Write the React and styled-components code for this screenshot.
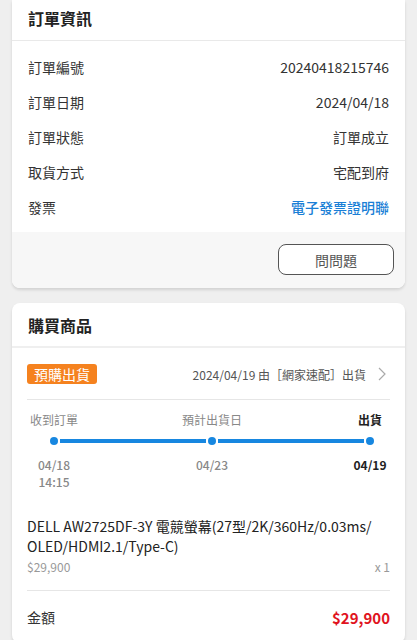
import React from 'react';
import styled, { createGlobalStyle, css } from 'styled-components';

const GlobalStyle = createGlobalStyle`
    html, body {
        margin: 0;
        padding: 0;
        background: #efefef;
        font-family: "Noto Sans CJK TC", "Noto Sans", sans-serif;
        color: #333;
    }
    * { box-sizing: border-box; }
`;

const Page = styled.div`
    width: 417px;
    height: 640px;
    overflow: hidden;
    padding: 0 12px;
    display: flex;
    flex-direction: column;
    gap: 15px;
`;

const Card = styled.div`
    background: #fff;
    border-radius: 8px;
    box-shadow: 0 2px 3px rgba(0, 0, 0, 0.12);
    overflow: hidden;
    flex-shrink: 0;
    ${props => props.flatTop && css`
        border-top-left-radius: 0;
        border-top-right-radius: 0;
    `}
`;

const CardHeader = styled.div`
    height: ${props => props.tall ? 45 : 41}px;
    padding: ${props => props.tall ? '10px' : '6px'} 16px 0;
    font-size: 16px;
    font-weight: 700;
    line-height: 24px;
    color: #222;
    border-bottom: ${props => props.tall ? '2px solid #efefef' : '1px solid #e9e9e9'};
`;

const InfoList = styled.div`
    padding: 8px 16px 8px;
`;

const InfoRow = styled.div`
    height: 35px;
    display: flex;
    align-items: center;
    justify-content: space-between;
    font-size: 14px;
    color: #333;
`;

const InfoValue = styled.span`
    ${props => props.link && css`
        color: #1a7fd6;
        font-weight: 500;
    `}
`;

const CardFooter = styled.div`
    background: #f7f7f7;
    padding: 12px 11px 13px;
    display: flex;
    justify-content: flex-end;
`;

const AskButton = styled.button`
    width: 116px;
    height: 31px;
    border: 1px solid #555;
    border-radius: 8px;
    background: #fff;
    font-family: inherit;
    font-size: 14px;
    color: #555;
`;

const Section = styled.div`
    padding: 0 15px;
`;

const ShipRow = styled.div`
    display: flex;
    align-items: center;
    justify-content: space-between;
    padding: 16px 0 15px;
    border-bottom: 1px solid #e6e6e6;
`;

const Badge = styled.span`
    background: #f5821f;
    color: #fff;
    font-size: 14px;
    line-height: 20px;
    padding: 0 7px;
    border-radius: 3px;
`;

const ShipInfo = styled.span`
    display: flex;
    align-items: center;
    gap: 12px;
    padding-right: 4px;
    font-size: 12px;
    color: #555;
`;

const Timeline = styled.div`
    margin: 0 -10px 0 -3px;
    padding-top: 11px;
`;

const StepRow = styled.div`
    display: flex;
    justify-content: space-between;
`;

const StepCell = styled.div`
    width: 60px;
    display: flex;
    flex-direction: column;
    align-items: center;
    white-space: nowrap;
    font-size: 12px;
    line-height: ${props => props.date ? 17 : 18}px;
    color: #888;
    font-weight: ${props => props.date ? 500 : 400};
    ${props => props.active && css`
        color: #222;
        font-weight: 700;
    `}
`;

const Track = styled.div`
    display: flex;
    align-items: center;
    padding: 8px 26px 11px;
`;

const Dot = styled.span`
    width: 8px;
    height: 8px;
    border-radius: 50%;
    background: #1787e0;
    flex-shrink: 0;
`;

const Segment = styled.span`
    flex: 1;
    height: 4px;
    margin: 0 2px;
    background: #1787e0;
`;

const Product = styled.div`
    padding-top: 26px;
    padding-bottom: 14px;
    border-bottom: 1px solid #e6e6e6;
`;

const ProductName = styled.div`
    font-size: 14px;
    line-height: 20px;
    color: #222;
`;

const PriceRow = styled.div`
    display: flex;
    justify-content: space-between;
    margin-top: 2px;
    font-size: 12px;
    line-height: 18px;
    color: #999;
`;

const TotalRow = styled.div`
    display: flex;
    justify-content: space-between;
    align-items: center;
    height: 52px;
    font-size: 14px;
    color: #333;
`;

const TotalPrice = styled.span`
    color: #e0141e;
    font-weight: 700;
    font-size: 15px;
`;

const info = [
    ['訂單編號', '20240418215746'],
    ['訂單日期', '2024/04/18'],
    ['訂單狀態', '訂單成立'],
    ['取貨方式', '宅配到府'],
    ['發票', '電子發票證明聯', true],
];

const steps = [
    { label: '收到訂單', date: ['04/18', '14:15'] },
    { label: '預計出貨日', date: ['04/23'] },
    { label: '出貨', date: ['04/19'], active: true },
];

function Chevron() {
    return (
        <svg width="8" height="14" viewBox="0 0 8 14">
            <polyline points="1,1 7,7 1,13" fill="none" stroke="#aaa" strokeWidth="1.2" />
        </svg>
    );
}

export default function App() {
    return (
        <>
            <GlobalStyle />
            <Page>
                <Card flatTop>
                    <CardHeader>訂單資訊</CardHeader>
                    <InfoList>
                        {info.map(([label, value, link]) => (
                            <InfoRow key={label}>
                                <span>{label}</span>
                                <InfoValue link={link}>{value}</InfoValue>
                            </InfoRow>
                        ))}
                    </InfoList>
                    <CardFooter>
                        <AskButton>問問題</AskButton>
                    </CardFooter>
                </Card>

                <Card>
                    <CardHeader tall>購買商品</CardHeader>
                    <Section>
                        <ShipRow>
                            <Badge>預購出貨</Badge>
                            <ShipInfo>
                                2024/04/19 由［網家速配］出貨
                                <Chevron />
                            </ShipInfo>
                        </ShipRow>
                        <Timeline>
                            <StepRow>
                                {steps.map(s => (
                                    <StepCell key={s.label} active={s.active}>{s.label}</StepCell>
                                ))}
                            </StepRow>
                            <Track>
                                <Dot />
                                <Segment />
                                <Dot />
                                <Segment />
                                <Dot />
                            </Track>
                            <StepRow>
                                {steps.map(s => (
                                    <StepCell key={s.label} date active={s.active}>
                                        {s.date.map(d => <div key={d}>{d}</div>)}
                                    </StepCell>
                                ))}
                            </StepRow>
                        </Timeline>
                        <Product>
                            <ProductName>
                                DELL AW2725DF-3Y 電競螢幕(27型/2K/360Hz/0.03ms/<br />
                                OLED/HDMI2.1/Type-C)
                            </ProductName>
                            <PriceRow>
                                <span>$29,900</span>
                                <span>x 1</span>
                            </PriceRow>
                        </Product>
                        <TotalRow>
                            <span>金額</span>
                            <TotalPrice>$29,900</TotalPrice>
                        </TotalRow>
                    </Section>
                </Card>
            </Page>
        </>
    );
}
